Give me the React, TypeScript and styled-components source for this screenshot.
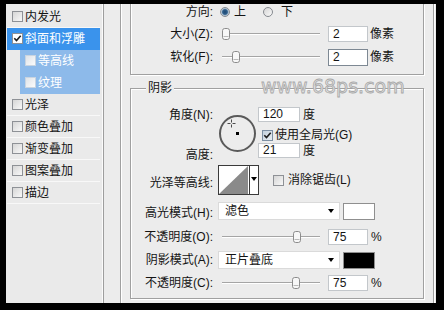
import React from 'react';
import styled, { createGlobalStyle } from 'styled-components';

const GlobalStyle = createGlobalStyle`
  html, body { margin: 0; padding: 0; background: #000; }
  #root { width: 444px; height: 310px; }
`;

const UI_FONT = `"Liberation Sans", "Noto Sans CJK SC", sans-serif`;

const Screen = styled.div`
  box-sizing: border-box;
  width: 444px;
  height: 310px;
  padding: 4px 8px 7px 6px;
  background: #000;
`;

const Dialog = styled.div`
  position: relative;
  display: flex;
  height: 299px;
  background: #ececec;
  overflow: hidden;
  font-family: ${UI_FONT};
  font-size: 12px;
  color: #141414;
`;

/* ---------- left style list ---------- */
const StyleList = styled.ul`
  margin: 0;
  padding: 2px 0 0;
  list-style: none;
  width: 97px;
  flex-shrink: 0;
  display: flex;
  flex-direction: column;
  background: #eaeaea;
  border-right: 1px solid #9e9e9e;
  box-shadow: inset -1px 0 0 #fbfbfb;
`;

type Tone = 'plain' | 'selected' | 'sub';

const StyleItem = styled.li<{ $level: number; $tone: Tone }>`
  box-sizing: border-box;
  height: 22px;
  display: flex;
  align-items: center;
  gap: 2px;
  margin: 0 3px 0 ${p => (p.$level ? 14 : 1)}px;
  padding-left: 5px;
  border-bottom: 1px solid ${p => (p.$tone === 'plain' ? '#f8f8f8' : 'transparent')};
  background: ${p =>
    p.$tone === 'selected' ? '#3a93ec' : p.$tone === 'sub' ? '#8dbaea' : 'transparent'};
  color: ${p => (p.$tone === 'plain' ? '#151515' : '#ffffff')};
  line-height: 16px;
  white-space: nowrap;
`;

/* ---------- generic controls ---------- */
const Box = styled.span<{ $checked?: boolean; $tint?: 'blue' | 'light' | 'plain'; $ml?: number }>`
  box-sizing: border-box;
  width: 11px;
  height: 11px;
  flex-shrink: 0;
  margin-left: ${p => p.$ml ?? 0}px;
  display: grid;
  place-items: center;
  border: 1px solid ${p => (p.$tint === 'light' ? '#c9d4e0' : p.$tint === 'blue' ? '#7d8fa3' : '#8e9196')};
  background: ${p =>
    p.$tint === 'blue'
      ? 'linear-gradient(135deg, #c3d0dc 0%, #e9eef3 100%)'
      : p.$checked
      ? '#ffffff'
      : p.$tint === 'light'
      ? 'linear-gradient(135deg, #dfe3e8 0%, #fbfbfb 100%)'
      : 'linear-gradient(135deg, #d6d6d6 0%, #f8f8f8 100%)'};
`;

const CheckBox: React.FC<{ checked?: boolean; tint?: 'blue' | 'light' | 'plain'; ml?: number }> = ({
  checked,
  tint = 'plain',
  ml,
}) => (
  <Box $checked={checked} $tint={tint} $ml={ml}>
    {checked && (
      <svg width="9" height="9" viewBox="0 0 9 9">
        <path d="M1.3 4.3 L3.5 6.6 L7.7 1.8" fill="none" stroke="#1c1c1c" strokeWidth="1.6" />
      </svg>
    )}
  </Box>
);

const RadioDot = styled.span<{ $on?: boolean; $ml?: number }>`
  box-sizing: border-box;
  width: 10px;
  height: 10px;
  flex-shrink: 0;
  margin-left: ${p => p.$ml ?? 0}px;
  border-radius: 50%;
  border: 1px solid #868a90;
  background: ${p =>
    p.$on
      ? 'radial-gradient(circle at 50% 50%, #1d4670 0, #2f5f8c 2.4px, #a9bccd 3.4px, #e9eef3 100%)'
      : 'linear-gradient(135deg, #d6d6d6, #f9f9f9)'};
`;

const Text = styled.span<{ $ml?: number }>`
  margin-left: ${p => p.$ml ?? 0}px;
  line-height: 16px;
  white-space: nowrap;
`;

const NumField = styled.span<{ $w: number; $h: number; $ml?: number; $dark?: boolean }>`
  box-sizing: border-box;
  width: ${p => p.$w}px;
  height: ${p => p.$h}px;
  flex-shrink: 0;
  margin-left: ${p => p.$ml ?? 0}px;
  padding-left: 4px;
  background: #ffffff;
  border: 1px solid ${p => (p.$dark ? '#7d8893' : '#c3c7cb')};
  line-height: ${p => p.$h - 2}px;
  font-size: 12px;
`;

const Slider = styled.div<{ $ml?: number }>`
  position: relative;
  width: 98px;
  height: 12px;
  flex-shrink: 0;
  margin-left: ${p => p.$ml ?? 0}px;
  display: flex;
  align-items: center;
`;

const Groove = styled.span`
  flex: 1;
  height: 0;
  border-top: 1px solid #a5a5a5;
  border-bottom: 1px solid #ffffff;
`;

const ThumbSvg = styled.svg`
  position: absolute;
  top: 0;
`;

const SliderControl: React.FC<{ thumb: number; ml?: number }> = ({ thumb, ml }) => (
  <Slider $ml={ml}>
    <Groove />
    <ThumbSvg width="8" height="12" viewBox="0 0 8 12" style={{ left: thumb }}>
      <rect x="0.5" y="0.5" width="7" height="11" rx="2.2" fill="#f7f7f7" stroke="#8c8c8c" />
      <line x1="1.5" y1="8.5" x2="6.5" y2="8.5" stroke="#b9b9b9" />
    </ThumbSvg>
  </Slider>
);

const Caret = styled.span`
  width: 0;
  height: 0;
  border-left: 3.5px solid transparent;
  border-right: 3.5px solid transparent;
  border-top: 4px solid #000;
`;

const Dropdown = styled.div<{ $ml?: number }>`
  box-sizing: border-box;
  width: 122px;
  height: 18px;
  flex-shrink: 0;
  margin-left: ${p => p.$ml ?? 0}px;
  display: flex;
  align-items: center;
  justify-content: space-between;
  padding: 0 5px 0 6px;
  background: #ffffff;
  border: 1px solid #dadada;
  line-height: 16px;
`;

const Swatch = styled.span<{ $color: string; $ml?: number }>`
  box-sizing: border-box;
  width: 32px;
  height: 17px;
  flex-shrink: 0;
  margin-left: ${p => p.$ml ?? 0}px;
  background: ${p => p.$color};
  border: 1px solid #8f8f8f;
`;

/* ---------- panels ---------- */
const Frame = styled.div`
  flex: 1;
  margin: 0 2px 0 16px;
  padding: 0 9px;
  display: flex;
  flex-direction: column;
  border-left: 1px solid #a0a0a0;
  border-right: 1px solid #a0a0a0;
  box-shadow: inset 1px 0 0 #ffffff, 1px 0 0 #ffffff;
`;

const GroupBox = styled.section<{ $open?: boolean; $mt?: number; $pb?: number; $h?: number }>`
  box-sizing: border-box;
  display: flex;
  flex-direction: column;
  flex-shrink: 0;
  margin-top: ${p => p.$mt ?? 0}px;
  padding-bottom: ${p => p.$pb ?? 0}px;
  ${p => (p.$h ? `height: ${p.$h}px;` : '')}
  border: 1px solid #a0a0a0;
  ${p => (p.$open ? 'border-top: none;' : '')}
  box-shadow: ${p => (p.$open ? 'inset 1px 0 0 #fff' : 'inset 1px 1px 0 #fff')}, 1px 1px 0 #fff;
`;

const GroupTitle = styled.h3`
  align-self: flex-start;
  margin: -8px 0 0 15px;
  padding: 0 2px;
  font: inherit;
  line-height: 14px;
  background: #ececec;
`;

const Row = styled.div<{ $h: number; $mt?: number }>`
  display: flex;
  align-items: center;
  flex-shrink: 0;
  height: ${p => p.$h}px;
  margin-top: ${p => p.$mt ?? 0}px;
`;

const Label = styled.label<{ $dy?: number }>`
  width: 82px;
  flex-shrink: 0;
  margin-top: ${p => p.$dy ?? 0}px;
  text-align: right;
  white-space: nowrap;
  line-height: 16px;
`;

const AngleBlock = styled.div`
  display: flex;
  align-items: flex-start;
  margin-top: 12px;
`;

const LabelStack = styled.div`
  display: flex;
  flex-direction: column;
`;

const AngleDial = styled.div`
  position: relative;
  box-sizing: border-box;
  width: 37px;
  height: 37px;
  margin: 8px 0 0 6px;
  border-radius: 50%;
  border: 2px solid #5a5a5a;
  display: grid;
  place-items: center;
`;

const DialCenter = styled.span`
  width: 3px;
  height: 3px;
  background: #000;
`;

const Crosshair = styled.svg`
  position: absolute;
  left: 6px;
  top: 2px;
`;

const AngleFields = styled.div`
  display: flex;
  flex-direction: column;
  margin-left: 2px;
`;

const FieldLine = styled.div<{ $mt?: number; $h: number }>`
  display: flex;
  align-items: center;
  height: ${p => p.$h}px;
  margin-top: ${p => p.$mt ?? 0}px;
`;

const ContourPicker = styled.div<{ $ml?: number }>`
  box-sizing: border-box;
  width: 41px;
  height: 30px;
  flex-shrink: 0;
  margin-left: ${p => p.$ml ?? 0}px;
  display: flex;
  border: 1px solid #3a3a3a;
  background: #ffffff;
`;

const ContourPreview = styled.svg`
  display: block;
  border-right: 1px solid #3a3a3a;
`;

const ContourButton = styled.span`
  flex: 1;
  display: grid;
  place-items: center;
  padding-bottom: 2px;
`;

const Watermark = styled.div`
  position: absolute;
  left: 255px;
  top: 73px;
  font-family: "DejaVu Sans", sans-serif;
  font-size: 19px;
  line-height: 19px;
  color: #e3e3e3;
  -webkit-text-stroke: 0.8px #a8a8a8;
  pointer-events: none;
  white-space: nowrap;
`;

const layers: { name: string; level: number; tone: Tone; checked: boolean }[] = [
  { name: '内发光', level: 0, tone: 'plain', checked: false },
  { name: '斜面和浮雕', level: 0, tone: 'selected', checked: true },
  { name: '等高线', level: 1, tone: 'sub', checked: false },
  { name: '纹理', level: 1, tone: 'sub', checked: false },
  { name: '光泽', level: 0, tone: 'plain', checked: false },
  { name: '颜色叠加', level: 0, tone: 'plain', checked: false },
  { name: '渐变叠加', level: 0, tone: 'plain', checked: false },
  { name: '图案叠加', level: 0, tone: 'plain', checked: false },
  { name: '描边', level: 0, tone: 'plain', checked: false },
];

export default function App() {
  return (
    <>
      <GlobalStyle />
      <Screen>
        <Dialog>
          <StyleList>
            {layers.map(l => (
              <StyleItem key={l.name} $level={l.level} $tone={l.tone}>
                <CheckBox checked={l.checked} tint={l.tone === 'sub' ? 'light' : 'plain'} />
                <span>{l.name}</span>
              </StyleItem>
            ))}
          </StyleList>

          <Frame>
            <GroupBox $open $h={71}>
              <Row $h={16}>
                <Label>方向:</Label>
                <RadioDot $on $ml={7} />
                <Text $ml={4}>上</Text>
                <RadioDot $ml={17} />
                <Text $ml={8}>下</Text>
              </Row>
              <Row $h={16} $mt={6}>
                <Label>大小(Z):</Label>
                <SliderControl ml={9} thumb={0} />
                <NumField $w={40} $h={16} $ml={8}>2</NumField>
                <Text $ml={2}>像素</Text>
              </Row>
              <Row $h={16} $mt={7}>
                <Label>软化(F):</Label>
                <SliderControl ml={9} thumb={10} />
                <NumField $w={40} $h={17} $ml={8} $dark>2</NumField>
                <Text $ml={2}>像素</Text>
              </Row>
            </GroupBox>

            <GroupBox $mt={13} $pb={7}>
              <GroupTitle>阴影</GroupTitle>
              <AngleBlock>
                <LabelStack>
                  <Label>角度(N):</Label>
                  <Label $dy={24}>高度:</Label>
                </LabelStack>
                <AngleDial>
                  <Crosshair width="9" height="9" viewBox="0 0 9 9">
                    <path d="M4.5 0.5 V3.5 M4.5 5.5 V8.5 M0.5 4.5 H3.5 M5.5 4.5 H8.5" stroke="#4a4a4a" strokeWidth="1" />
                  </Crosshair>
                  <DialCenter />
                </AngleDial>
                <AngleFields>
                  <FieldLine $h={15}>
                    <NumField $w={42} $h={15}>120</NumField>
                    <Text $ml={3}>度</Text>
                  </FieldLine>
                  <FieldLine $h={12} $mt={7}>
                    <CheckBox checked tint="blue" ml={4} />
                    <Text $ml={2}>使用全局光(G)</Text>
                  </FieldLine>
                  <FieldLine $h={15} $mt={2}>
                    <NumField $w={42} $h={15}>21</NumField>
                    <Text $ml={3}>度</Text>
                  </FieldLine>
                </AngleFields>
              </AngleBlock>

              <Row $h={30} $mt={2}>
                <Label $dy={6}>光泽等高线:</Label>
                <ContourPicker $ml={5}>
                  <ContourPreview width="30" height="28" viewBox="0 0 30 28">
                    <polygon points="0,28 29,0 29,28" fill="#8a8a8a" />
                  </ContourPreview>
                  <ContourButton>
                    <Caret />
                  </ContourButton>
                </ContourPicker>
                <CheckBox ml={14} />
                <Text $ml={4}>消除锯齿(L)</Text>
              </Row>

              <Row $h={18} $mt={7}>
                <Label $dy={4}>高光模式(H):</Label>
                <Dropdown $ml={5}>
                  <span>滤色</span>
                  <Caret />
                </Dropdown>
                <Swatch $color="#ffffff" $ml={3} />
              </Row>

              <Row $h={17} $mt={8}>
                <Label>不透明度(O):</Label>
                <SliderControl ml={9} thumb={71} />
                <NumField $w={40} $h={16} $ml={8}>75</NumField>
                <Text $ml={3}>%</Text>
              </Row>

              <Row $h={18} $mt={6}>
                <Label>阴影模式(A):</Label>
                <Dropdown $ml={5}>
                  <span>正片叠底</span>
                  <Caret />
                </Dropdown>
                <Swatch $color="#000000" $ml={3} />
              </Row>

              <Row $h={16} $mt={6}>
                <Label>不透明度(C):</Label>
                <SliderControl ml={9} thumb={70} />
                <NumField $w={40} $h={16} $ml={8}>75</NumField>
                <Text $ml={3}>%</Text>
              </Row>
            </GroupBox>
          </Frame>

          <Watermark>www.68ps.com</Watermark>
        </Dialog>
      </Screen>
    </>
  );
}
